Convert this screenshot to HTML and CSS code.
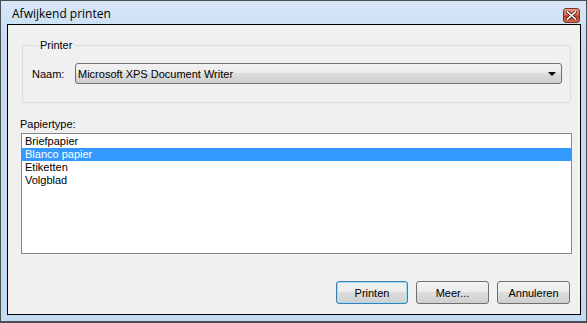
FILE: index.html
```html
<!DOCTYPE html>
<html lang="nl">
<head>
    <meta charset="UTF-8">
    <meta name="viewport" content="width=device-width, initial-scale=1.0">
    <title>Afwijkend printen</title>
    <link rel="stylesheet" href="styles.css">
</head>
<body>
    <div class="window">
        <div class="titlebar">
            <span class="title">Afwijkend printen</span>
            <span class="close-btn">
                <svg width="11" height="9" viewBox="0 0 11 9">
                    <path d="M1.5 1 L9.5 8 M9.5 1 L1.5 8" stroke="#4a1f18" stroke-width="3.2" stroke-linecap="square"/>
                    <path d="M1.5 1 L9.5 8 M9.5 1 L1.5 8" stroke="#fff" stroke-width="1.6" stroke-linecap="square"/>
                </svg>
            </span>
        </div>
        <div class="client">
            <fieldset class="group">
                <legend>Printer</legend>
                <div class="row">
                    <label class="lbl">Naam:</label>
                    <div class="select">
                        <span>Microsoft XPS Document Writer</span>
                        <span class="arrow"></span>
                    </div>
                </div>
            </fieldset>
            <div class="list-label">Papiertype:</div>
            <ul class="listbox">
                <li>Briefpapier</li>
                <li class="selected">Blanco papier</li>
                <li>Etiketten</li>
                <li>Volgblad</li>
            </ul>
            <div class="buttons">
                <div class="btn default">Printen</div>
                <div class="btn">Meer...</div>
                <div class="btn">Annuleren</div>
            </div>
        </div>
    </div>
</body>
</html>
```
FILE: styles.css
```css
*{
    margin: 0;
    padding: 0;
    box-sizing: border-box;
}
body{
    background-color: #f0f0f0;
    font-family: "Liberation Sans", Arial, sans-serif;
    font-size: 11px;
    color: #000;
}
.window{
    width: 587px;
    height: 323px;
    border: 1px solid #4a4f55;
    border-bottom-width: 2px;
    background: linear-gradient(#d9e8f9, #c6dbf2 40px, #c4daf1);
    display: flex;
    flex-direction: column;
}
.titlebar{
    height: 23px;
    display: flex;
    align-items: center;
    justify-content: space-between;
    padding: 0 6px 0 11px;
}
.title{
    font-family: "Open Sans", "Noto Sans", sans-serif;
    font-size: 12px;
    color: #000;
    padding-top: 1px;
}
.close-btn{
    width: 17px;
    height: 15px;
    margin-top: 5px;
    border: 1px solid #7a3426;
    border-radius: 3px;
    background: linear-gradient(#e59a86, #d66a50 45%, #c2391d 55%, #d5684b);
    display: flex;
    align-items: center;
    justify-content: center;
}
.client{
    flex: 1;
    margin: 0 5px 6px 6px;
    border: 1px solid #000;
    background-color: #f0f0f0;
    display: flex;
    flex-direction: column;
}
.group{
    margin: 14px 9px 0 14px;
    border: 1px solid #d5dfe5;
    border-radius: 3px;
    padding: 11px 8px 18px 9px;
}
.group legend{
    margin-left: 6px;
    padding: 0 2px;
    line-height: 13px;
}
.row{
    display: flex;
    align-items: center;
}
.lbl{
    width: 43px;
}
.select{
    flex: 1;
    height: 21px;
    border: 1px solid #707070;
    border-radius: 3px;
    background: linear-gradient(#f2f2f2, #ebebeb 50%, #dddddd 50%, #cfcfcf);
    display: flex;
    align-items: center;
    justify-content: space-between;
    padding: 0 5px 0 2px;
}
.arrow{
    width: 0;
    height: 0;
    border-left: 4px solid transparent;
    border-right: 4px solid transparent;
    border-top: 4px solid #000;
    margin-top: 1px;
}
.list-label{
    margin: 15px 0 2px 12px;
    line-height: 13px;
}
.listbox{
    height: 121px;
    margin: 0 8px 0 13px;
    border: 1px solid #828790;
    background-color: #fff;
    padding-top: 1px;
    list-style: none;
}
.listbox li{
    height: 13px;
    line-height: 13px;
    padding-left: 3px;
}
.listbox .selected{
    background-color: #3399ff;
    color: #fff;
}
.buttons{
    display: flex;
    justify-content: flex-end;
    gap: 8px;
    margin: 27px 10px 0 0;
}
.btn{
    width: 73px;
    height: 23px;
    border: 1px solid #707070;
    border-radius: 3px;
    background: linear-gradient(#f2f2f2, #ebebeb 50%, #dddddd 50%, #cfcfcf);
    display: flex;
    align-items: center;
    justify-content: center;
}
.btn.default{
    width: 72px;
    border-color: #3c7fb1;
    box-shadow: inset 0 0 0 1px #9fdcf5;
}
```
